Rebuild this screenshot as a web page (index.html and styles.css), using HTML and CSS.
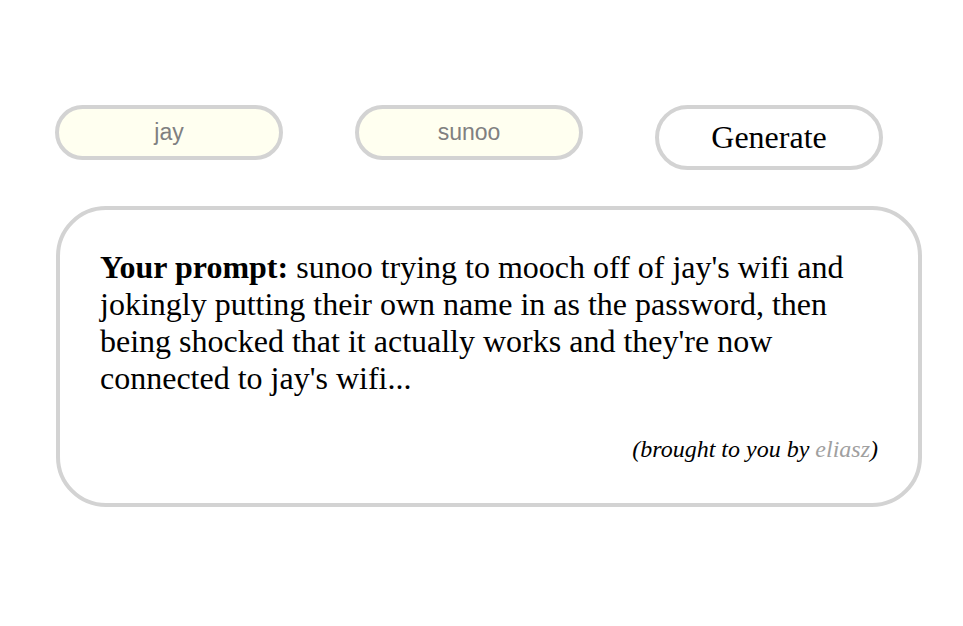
FILE: index.html
```html
<!DOCTYPE html>
<html lang="en">
<head>
  <meta charset="UTF-8" />
  <title>Prompt generator</title>
  <link rel="stylesheet" href="styles.css">
</head>
<body>
<div class="controls">
  <input class="name" type="text" placeholder="jay">
  <input class="name" type="text" placeholder="sunoo">
  <button class="generate">Generate</button>
</div>

<div class="prompt">
  <p class="text"><b>Your prompt:</b> sunoo trying to mooch off of jay's wifi and jokingly putting their own name in as the password, then being shocked that it actually works and they're now connected to jay's wifi...</p>
  <p class="credit">(brought to you by <span class="author">eliasz</span>)</p>
</div>
</body>
</html>
```

FILE: styles.css
```css
body {
  margin: 8px;
  font-family: "Liberation Serif", serif;
}
.controls {
  display: flex;
  align-items: flex-start;
  gap: 72px;
  margin: 97px 0 0 47px;
}
.name {
  box-sizing: border-box;
  width: 228px;
  height: 55px;
  padding: 0;
  border: 4px solid #d3d3d3;
  border-radius: 28px;
  background-color: #fffff0;
  font-family: "Liberation Sans", sans-serif;
  font-size: 23px;
  text-align: center;
  outline: none;
}
.name::placeholder {
  color: #808080;
}
.generate {
  box-sizing: border-box;
  width: 228px;
  height: 65px;
  border: 4px solid #d3d3d3;
  border-radius: 33px;
  background-color: white;
  font-family: "Liberation Serif", serif;
  font-size: 32px;
  color: black;
}
.prompt {
  box-sizing: border-box;
  width: 866px;
  margin: 36px 0 0 48px;
  padding: 39px 40px 40px 40px;
  border: 4px solid #d3d3d3;
  border-radius: 50px;
}
.text {
  margin: 0;
  font-size: 32px;
}
.credit {
  margin: 39px 0 0 0;
  text-align: right;
  font-style: italic;
  font-size: 24px;
}
.author {
  color: #a0a0a0;
}
```
